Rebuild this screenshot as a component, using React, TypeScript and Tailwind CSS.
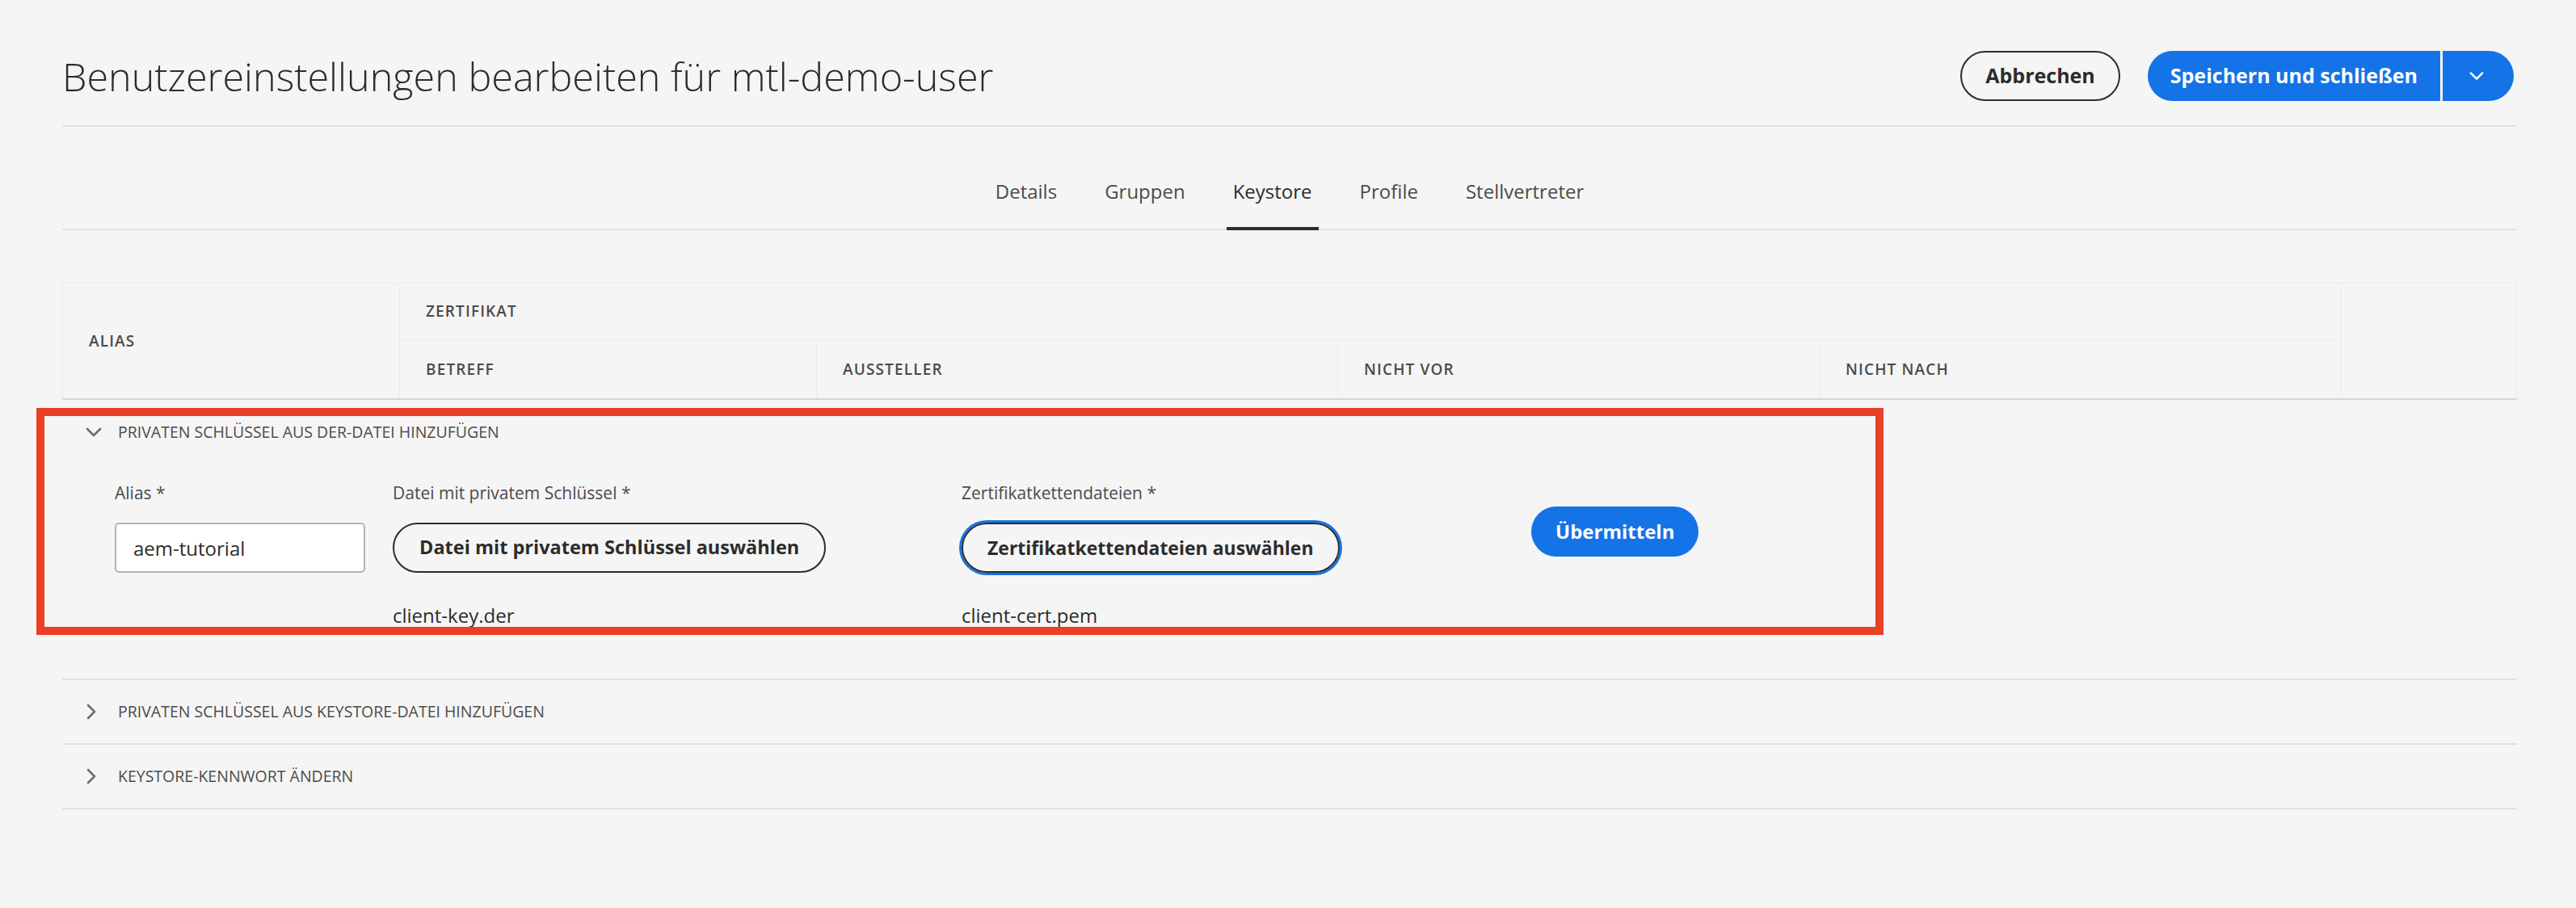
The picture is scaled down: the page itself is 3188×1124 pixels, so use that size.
import React from 'react';

function ChevronDown({ className }: { className?: string }) {
    return (
        <svg viewBox="0 0 20 12" className={className} fill="none" stroke="currentColor" strokeWidth={2.6} strokeLinecap="round" strokeLinejoin="round">
            <path d="M2 2l8 8 8-8" />
        </svg>
    );
}

function ChevronRight({ className }: { className?: string }) {
    return (
        <svg viewBox="0 0 12 20" className={className} fill="none" stroke="currentColor" strokeWidth={2.6} strokeLinecap="round" strokeLinejoin="round">
            <path d="M2 2l8 8-8 8" />
        </svg>
    );
}

const tabs = ['Details', 'Gruppen', 'Keystore', 'Profile', 'Stellvertreter'];

export default function App() {
    return (
        <div className="relative min-h-screen bg-[#f5f5f5] pl-[77px] pr-[73px] font-['Open_Sans',sans-serif] text-[#2c2c2c]">
            {/* header */}
            <header className="flex items-center justify-between border-b-2 border-[#e3e3e3] pt-[63px] pb-[30px]">
                <h1 className="text-[48.5px] font-light leading-[62px] text-[#2c2c2c]">
                    Benutzereinstellungen bearbeiten für mtl-demo-user
                </h1>
                <div className="mr-[4px] flex items-center gap-[34px]">
                    <button className="h-[62px] rounded-full border-2 border-[#2c2c2c] px-[29px] text-[25px] font-bold text-[#2c2c2c]">
                        Abbrechen
                    </button>
                    <div className="flex h-[62px] overflow-hidden rounded-full bg-[#1473e6] text-white">
                        <button className="pl-[28px] pr-[28px] text-[25px] font-bold">Speichern und schließen</button>
                        <div className="w-[3px] bg-[#f5f5f5]" />
                        <button className="flex w-[88px] items-center justify-center pr-[4px]">
                            <ChevronDown className="h-[12px] w-[18px]" />
                        </button>
                    </div>
                </div>
            </header>

            {/* tabs */}
            <nav className="flex justify-center gap-[43px] border-b-2 border-[#e3e3e3]">
                {tabs.map((t) => (
                    <div
                        key={t}
                        className={
                            t === 'Keystore'
                                ? '-mb-[2px] border-b-4 border-[#2c2c2c] px-[8px] pt-[62px] pb-[26px] text-[24px] leading-[36px] text-[#2c2c2c]'
                                : '-mb-[2px] border-b-4 border-transparent px-[8px] pt-[62px] pb-[26px] text-[24px] leading-[36px] text-[#4b4b4b]'
                        }
                    >
                        {t}
                    </div>
                ))}
            </nav>

            {/* table header */}
            <div className="mt-[65px] grid grid-cols-[417px_516px_645px_596px_646px_1fr] grid-rows-[70px_72px] border-x border-t border-b-2 border-[#ebebeb] border-b-[#d6d6d6] text-[19px] font-semibold uppercase tracking-[0.06em] text-[#4b4b4b]">
                <div className="row-span-2 flex items-center border-r border-[#ebebeb] pl-[32px]">Alias</div>
                <div className="col-span-4 flex items-center border-b border-r border-[#ebebeb] pl-[32px]">Zertifikat</div>
                <div className="row-span-2" />
                <div className="flex items-center border-r border-[#ebebeb] pl-[32px]">Betreff</div>
                <div className="flex items-center border-r border-[#ebebeb] pl-[32px]">Aussteller</div>
                <div className="flex items-center border-r border-[#ebebeb] pl-[32px]">Nicht vor</div>
                <div className="flex items-center border-r border-[#ebebeb] pl-[32px]">Nicht nach</div>
            </div>

            {/* expanded section */}
            <section className="pl-[29px] pb-[63px]">
                <div className="flex items-center gap-[20px] pt-[26px] text-[19.5px] uppercase leading-[28px] text-[#4b4b4b]">
                    <ChevronDown className="h-[12px] w-[20px] text-[#6e6e6e]" />
                    <span>Privaten Schlüssel aus DER-Datei hinzufügen</span>
                </div>
                <div className="mt-[46px] ml-[36px] flex items-start">
                    <div className="w-[344px]">
                        <div className="mb-[22px] text-[21px] leading-[30px] text-[#4b4b4b]">Alias *</div>
                        <input
                            readOnly
                            value="aem-tutorial"
                            className="h-[62px] w-[310px] rounded-[5px] border-2 border-[#b3b3b3] bg-white px-[21px] text-[24px] text-[#2c2c2c] outline-none"
                        />
                    </div>
                    <div className="w-[704px]">
                        <div className="mb-[22px] text-[21px] leading-[30px] text-[#4b4b4b]">Datei mit privatem Schlüssel *</div>
                        <button className="h-[62px] rounded-full border-2 border-[#2c2c2c] px-[31px] text-[23.5px] font-bold text-[#2c2c2c]">
                            Datei mit privatem Schlüssel auswählen
                        </button>
                        <div className="mt-[38px] text-[24px] leading-[30px] text-[#2c2c2c]">client-key.der</div>
                    </div>
                    <div className="w-[705px]">
                        <div className="mb-[22px] text-[21px] leading-[30px] text-[#4b4b4b]">Zertifikatkettendateien *</div>
                        <button className="h-[62px] rounded-full border-2 border-[#2c2c2c] px-[30px] text-[23px] font-bold text-[#2c2c2c] ring-[3px] ring-[#1473e6]">
                            Zertifikatkettendateien auswählen
                        </button>
                        <div className="mt-[38px] text-[24px] leading-[30px] text-[#2c2c2c]">client-cert.pem</div>
                    </div>
                    <button className="mt-[32px] h-[62px] rounded-full bg-[#1473e6] px-[30px] text-[24px] font-bold text-white">
                        Übermitteln
                    </button>
                </div>
            </section>

            {/* collapsed sections */}
            <div className="flex h-[80px] items-center gap-[27px] border-t-2 border-[#e1e1e1] pl-[30px] text-[19.5px] uppercase text-[#4b4b4b]">
                <ChevronRight className="h-[20px] w-[12px] text-[#6e6e6e]" />
                <span>Privaten Schlüssel aus Keystore-Datei hinzufügen</span>
            </div>
            <div className="flex h-[82px] items-center gap-[27px] border-y-2 border-[#e1e1e1] pl-[30px] text-[19.5px] uppercase text-[#4b4b4b]">
                <ChevronRight className="h-[20px] w-[12px] text-[#6e6e6e]" />
                <span>Keystore-Kennwort ändern</span>
            </div>

            {/* annotation frame */}
            <div className="pointer-events-none absolute left-[45px] top-[505px] h-[281px] w-[2286px] border-[10px] border-[#ea4025]" />
        </div>
    );
}
